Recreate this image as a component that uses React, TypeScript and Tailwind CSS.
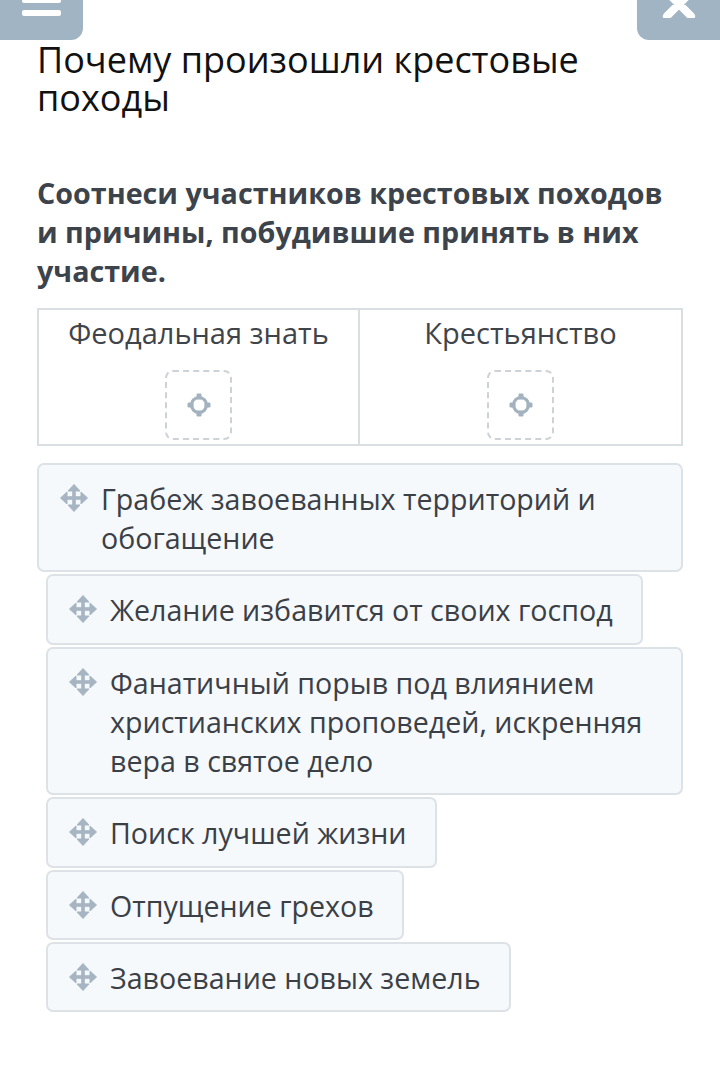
import React from "react";

const MoveIcon = () => (
  <svg width="30" height="30" viewBox="0 0 30 30" className="shrink-0">
    <g fill="#a6b5c1" stroke="#a6b5c1">
      <line x1="15" y1="6" x2="15" y2="24" strokeWidth="3.6" />
      <line x1="6" y1="15" x2="24" y2="15" strokeWidth="3.6" />
      <polygon points="15,1.5 21,8 9,8" strokeWidth="1" strokeLinejoin="round" />
      <polygon points="15,28.5 21,22 9,22" strokeWidth="1" strokeLinejoin="round" />
      <polygon points="1.5,15 8,9 8,21" strokeWidth="1" strokeLinejoin="round" />
      <polygon points="28.5,15 22,9 22,21" strokeWidth="1" strokeLinejoin="round" />
    </g>
  </svg>
);

const TargetIcon = () => (
  <svg width="26" height="26" viewBox="0 0 26 26">
    <g fill="#a3b2be">
      <circle cx="13" cy="13" r="7.5" fill="none" stroke="#a3b2be" strokeWidth="3.2" />
      <rect x="10.5" y="1.5" width="5" height="6" rx="1.2" />
      <rect x="10.5" y="18.5" width="5" height="6" rx="1.2" />
      <rect x="1.5" y="10.5" width="6" height="5" rx="1.2" />
      <rect x="18.5" y="10.5" width="6" height="5" rx="1.2" />
    </g>
  </svg>
);

const Item = ({ text, className }: { text: string; className?: string }) => (
  <div
    className={
      "flex items-start rounded-[7px] border-2 border-[#dce2e6] bg-[#f5f9fc] pl-[20px] pr-[28px] pt-[14px] pb-[13.4px] " +
      (className || "")
    }
  >
    <div className="mt-[4px] mr-[12px]">
      <MoveIcon />
    </div>
    <div className="text-[28.6px] leading-[39px] text-[#3b4046]">{text}</div>
  </div>
);

export default function App() {
  return (
    <div
      className="min-h-[1083px] w-[720px] bg-white"
      style={{ fontFamily: '"Open Sans", "Noto Sans", sans-serif' }}
    >
      <div className="flex h-[40px] justify-between">
        <div className="flex h-[40px] w-[83px] flex-col items-center justify-start gap-[7px] rounded-br-[12px] bg-[#a0b4c3]">
          <div className="mt-[-3px] h-[6px] w-[39px] rounded-[2px] bg-white" />
          <div className="h-[6px] w-[39px] rounded-[2px] bg-white" />
        </div>
        <div className="flex h-[40px] w-[83px] justify-center overflow-hidden rounded-bl-[12px] bg-[#a0b4c3]">
          <svg width="40" height="20" viewBox="0 0 40 20" className="mt-[-2px]">
            <path d="M8 -6 L20 6 L32 -6 M20 6 L32 18 M20 6 L8 18" stroke="white" strokeWidth="8" strokeLinecap="round" fill="none" />
          </svg>
        </div>
      </div>

      <div className="px-[37px]">
        <h1 className="mt-[1px] text-[36px] leading-[38px] font-normal text-[#111]">
          Почему произошли крестовые походы
        </h1>

        <p className="mt-[56px] text-[28.7px] font-bold leading-[39px] text-[#3d434b]">
          Соотнеси участников крестовых походов и причины, побудившие принять в них участие.
        </p>

        <div className="mt-[18px] grid grid-cols-2 border-2 border-[#d9dee1]">
          <div className="flex flex-col items-center border-r-2 border-[#d9dee1] pt-[3px] pb-[4px]">
            <div className="text-[29px] leading-[39px] text-[#3f444a]">Феодальная знать</div>
            <div className="mt-[18px] flex h-[70px] w-[67px] items-center justify-center rounded-[8px] border-2 border-dashed border-[#cdd2d6]">
              <TargetIcon />
            </div>
          </div>
          <div className="flex flex-col items-center pt-[3px] pb-[4px]">
            <div className="text-[29px] leading-[39px] text-[#3f444a]">Крестьянство</div>
            <div className="mt-[18px] flex h-[70px] w-[67px] items-center justify-center rounded-[8px] border-2 border-dashed border-[#cdd2d6]">
              <TargetIcon />
            </div>
          </div>
        </div>

        <div className="mt-[17px] flex flex-col items-start gap-[2px]">
          <Item className="w-full" text="Грабеж завоеванных территорий и обогащение" />
          <Item className="ml-[9px]" text="Желание избавится от своих господ" />
          <Item className="ml-[9px]" text="Фанатичный порыв под влиянием христианских проповедей, искренняя вера в святое дело" />
          <Item className="ml-[9px]" text="Поиск лучшей жизни" />
          <Item className="ml-[9px]" text="Отпущение грехов" />
          <Item className="ml-[9px]" text="Завоевание новых земель" />
        </div>
      </div>
    </div>
  );
}
